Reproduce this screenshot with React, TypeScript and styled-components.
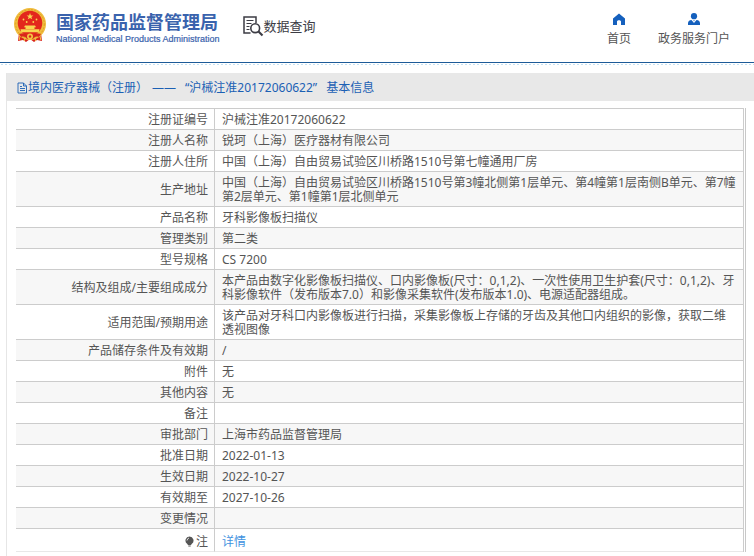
import React from "react";
import styled, { createGlobalStyle } from "styled-components";

const GlobalStyle = createGlobalStyle`
  * { box-sizing: border-box; }
  body {
    margin: 0;
    background: #fff;
    color: #555;
    font: 12px/14px "Noto Sans", "Noto Sans CJK SC", sans-serif;
    text-spacing-trim: space-all;
  }
`;

const Header = styled.header`
  display: flex;
  align-items: flex-start;
  height: 63px;
  padding: 8px 24px 0 13px;
  border-bottom: 1px solid #1d5b98;
`;

const DottedStrip = styled.div`
  height: 3px;
  background: radial-gradient(circle, #c3e1f3 1px, transparent 1px) 0 0 / 4px 3px;
`;

const Brand = styled.a`
  display: flex;
  align-items: flex-start;
  gap: 9px;
  color: #3a63ad;
  text-decoration: none;
`;

const BrandText = styled.span`
  display: flex;
  flex-direction: column;
  padding-top: 2px;
  white-space: nowrap;
`;

const BrandName = styled.span`
  font: 700 18px/22px "Noto Sans CJK SC", sans-serif;
`;

const BrandEnglish = styled.span`
  font: 9px/14px "Liberation Sans", sans-serif;
  -webkit-text-stroke: 0.2px currentColor;
`;

const Query = styled.a`
  display: flex;
  align-items: center;
  margin: 7px 0 0 22px;
  color: #3c3c44;
  font-size: 13px;
  line-height: 20px;
  text-decoration: none;
  white-space: nowrap;
`;

const Nav = styled.nav`
  display: flex;
  gap: 27px;
  margin-left: auto;
  padding-top: 4px;
`;

const NavLink = styled.a`
  display: flex;
  flex-direction: column;
  align-items: center;
  gap: 5px;
  color: #555;
  line-height: 16px;
  text-decoration: none;
  white-space: nowrap;
`;

const Panel = styled.main`
  margin: 7px 0 0 6px;
  padding-bottom: 4px;
  border-left: 1px solid #e6e6e6;
`;

const Title = styled.h1`
  display: flex;
  align-items: center;
  height: 28px;
  margin: 0;
  padding: 1px 0 0 10px;
  background: #e8e8e8;
  color: #1b60b4;
  font-size: 12px;
  font-weight: 400;
  white-space: nowrap;
`;

const TitlePart = styled.span<{ $gap?: number }>`
  margin-left: ${(p) => p.$gap ?? 0}px;
`;

const TableFrame = styled.div`
  margin: 7px 8px 0 9px;
  padding-right: 1px;
  border-right: 1px solid #c8c8c8;
`;

const Table = styled.table`
  width: 100%;
  table-layout: fixed;
  border-spacing: 0;
  border-top: 1px solid #ccc;
  border-right: 1px solid #ccc;
`;

const Row = styled.tr`
  &:nth-child(even) { background: #f7f7f7; }
  &:last-child > * {
    padding-top: 6px;
    padding-bottom: 2px;
    border-bottom-color: #e8e8e8;
  }
`;

const Label = styled.th`
  width: 199px;
  padding: 4px 6px 2px 0;
  border-right: 1px solid #ccc;
  border-bottom: 1px solid #ccc;
  font-weight: 400;
  text-align: right;
  vertical-align: middle;
`;

const Value = styled.td`
  padding: 4px 6px 2px 7px;
  border-bottom: 1px solid #ccc;
  vertical-align: middle;
`;

const DetailLink = styled.a`
  color: #3f92e0;
  text-decoration: none;
`;

const BulbSvg = styled.svg`
  margin-right: 2px;
  vertical-align: -1px;
`;

const Emblem = () => (
  <svg width="34" height="36" viewBox="0 0 34 36" aria-hidden="true">
    <path d="M6 25 5 33l5-1 3 2 4-3 4 3 3-2 5 1-1-8z" fill="#d9251c" />
    <circle cx="17" cy="16" r="16" fill="#f0bd3e" />
    <circle cx="17" cy="16" r="14.3" fill="none" stroke="#d99420" strokeDasharray="2 1.4" strokeWidth=".8" />
    <circle cx="17" cy="15" r="12.3" fill="#e3271c" />
    <path d="m17 5 .9 2.4h2.5l-2 1.5.8 2.4-2.2-1.4-2.2 1.4.8-2.4-2-1.5h2.5z" fill="#f8d650" />
    <g fill="#f8d650">
      <circle cx="10.5" cy="11.5" r=".9" />
      <circle cx="23.5" cy="11.5" r=".9" />
      <circle cx="13.7" cy="14" r=".9" />
      <circle cx="20.3" cy="14" r=".9" />
      <path d="M12 17.5h10l1 1.8H11zM12.5 19.3h9V21h-9zM7.5 21.3h19l-.8 3H8.3z" />
    </g>
    <path d="M6 26c4-1 7-1 8 1h6c1-2 4-2 8-1l-2 3c-3-1-5 0-6 2h-6c-1-2-3-3-6-2z" fill="#d9251c" />
    <circle cx="17" cy="28.5" r="3" fill="#f3c344" />
    <circle cx="17" cy="28.5" r="1.2" fill="#d9251c" />
    <path d="m7 28-.8 4M27 28l.8 4M12 30l-.6 3M22 30l.6 3" stroke="#f3c344" />
  </svg>
);

const QueryIcon = () => (
  <svg width="22" height="22" viewBox="0 0 22 22" fill="none" stroke="#3c3c44" aria-hidden="true">
    <path d="M8.5 18H2V2h12v6" strokeWidth="1.5" />
    <path d="M4.5 5.5h7M4.5 8.5h5M4.5 11.5h3M4.5 14.5h3" strokeWidth="1.2" />
    <circle cx="13.2" cy="13.2" r="4.4" strokeWidth="1.6" />
    <path d="m16.5 16.5 4 4" strokeWidth="2.2" />
  </svg>
);

const HomeIcon = () => (
  <svg width="14" height="14" viewBox="0 0 14 14" fill="#1560bd" aria-hidden="true">
    <path d="M7 1.5 1 6.6V13h4V9.7c0-1 .7-1.5 2-1.5s2 .5 2 1.5V13h4V6.6z" />
  </svg>
);

const UserIcon = () => (
  <svg width="14" height="14" viewBox="0 0 14 14" fill="#1560bd" aria-hidden="true">
    <circle cx="7" cy="4.2" r="3.1" />
    <path d="M1 13v-1.7c0-1.9 1.3-2.9 3.5-3.2L7 11l2.5-2.9c2.2.3 3.5 1.3 3.5 3.2V13z" />
    <path d="M6.2 8.3h1.6L7 9.6z" />
  </svg>
);

const DocumentIcon = () => (
  <svg width="11" height="12" viewBox="0 0 11 12" fill="none" stroke="#1b60b4" aria-hidden="true">
    <path d="M1 1h5.5L9.5 4v7H1zM6.5 1v3h3M3 4.5h2M3 6.5h5M3 8.5h5" strokeWidth=".9" />
  </svg>
);

const BulbIcon = () => (
  <BulbSvg width="9" height="11" viewBox="0 0 9 11" aria-hidden="true">
    <path d="M4.5.5a4 4 0 0 0-2.4 7.2L3 9h3l.9-1.3A4 4 0 0 0 4.5.5zM3.3 9.5h2.4v1H3.3z" fill="#555" />
    <path d="M2 4.5Q2.3 2.5 4 2" fill="none" stroke="#fff" strokeWidth=".8" />
  </BulbSvg>
);

const rows: { label: string; value: string }[] = [
  { label: "注册证编号", value: "沪械注准20172060622" },
  { label: "注册人名称", value: "锐珂（上海）医疗器材有限公司" },
  { label: "注册人住所", value: "中国（上海）自由贸易试验区川桥路1510号第七幢通用厂房" },
  {
    label: "生产地址",
    value: "中国（上海）自由贸易试验区川桥路1510号第3幢北侧第1层单元、第4幢第1层南侧B单元、第7幢第2层单元、第1幢第1层北侧单元",
  },
  { label: "产品名称", value: "牙科影像板扫描仪" },
  { label: "管理类别", value: "第二类" },
  { label: "型号规格", value: "CS 7200" },
  {
    label: "结构及组成/主要组成成分",
    value: "本产品由数字化影像板扫描仪、口内影像板(尺寸：0,1,2)、一次性使用卫生护套(尺寸：0,1,2)、牙科影像软件（发布版本7.0）和影像采集软件(发布版本1.0)、电源适配器组成。",
  },
  {
    label: "适用范围/预期用途",
    value: "该产品对牙科口内影像板进行扫描，采集影像板上存储的牙齿及其他口内组织的影像，获取二维透视图像",
  },
  { label: "产品储存条件及有效期", value: "/" },
  { label: "附件", value: "无" },
  { label: "其他内容", value: "无" },
  { label: "备注", value: "" },
  { label: "审批部门", value: "上海市药品监督管理局" },
  { label: "批准日期", value: "2022-01-13" },
  { label: "生效日期", value: "2022-10-27" },
  { label: "有效期至", value: "2027-10-26" },
  { label: "变更情况", value: "" },
];

export default function App() {
  return (
    <>
      <GlobalStyle />
      <Header>
        <Brand href="#">
          <Emblem />
          <BrandText>
            <BrandName>国家药品监督管理局</BrandName>
            <BrandEnglish>National Medical Products Administration</BrandEnglish>
          </BrandText>
        </Brand>
        <Query href="#query">
          <QueryIcon />
          数据查询
        </Query>
        <Nav>
          <NavLink href="#home">
            <HomeIcon />
            首页
          </NavLink>
          <NavLink href="#portal">
            <UserIcon />
            政务服务门户
          </NavLink>
        </Nav>
      </Header>
      <DottedStrip />
      <Panel>
        <Title>
          <DocumentIcon />
          <TitlePart>境内医疗器械（注册）</TitlePart>
          <TitlePart $gap={4}>——</TitlePart>
          <TitlePart $gap={9}>“沪械注准20172060622”</TitlePart>
          <TitlePart $gap={9}>基本信息</TitlePart>
        </Title>
        <TableFrame>
          <Table>
            <tbody>
              {rows.map((row) => (
                <Row key={row.label}>
                  <Label scope="row">{row.label}</Label>
                  <Value>{row.value}</Value>
                </Row>
              ))}
              <Row>
                <Label scope="row">
                  <BulbIcon />注
                </Label>
                <Value>
                  <DetailLink href="#detail">详情</DetailLink>
                </Value>
              </Row>
            </tbody>
          </Table>
        </TableFrame>
      </Panel>
    </>
  );
}
